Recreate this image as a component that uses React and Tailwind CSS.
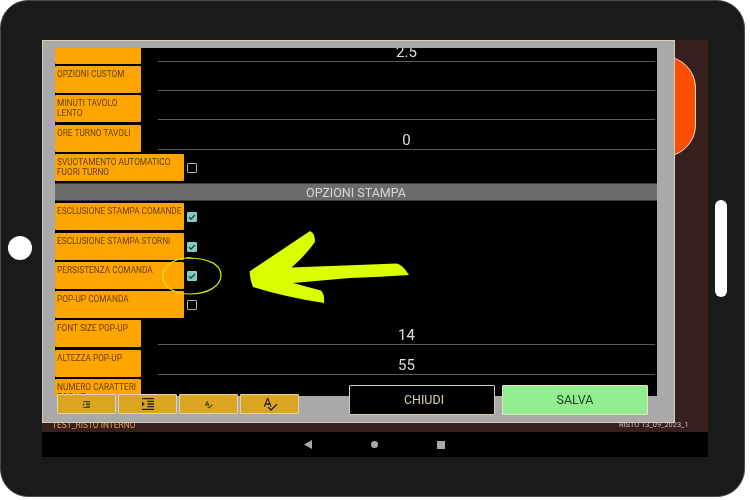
import React from "react";
import { MdFormatIndentIncrease, MdSpellcheck } from "react-icons/md";

const ROWS = [
  { label: "", value: "2.5" },
  { label: "OPZIONI CUSTOM", value: "" },
  { label: "MINUTI TAVOLO LENTO", value: "" },
  { label: "ORE TURNO TAVOLI", value: "0" },
  { label: "SVUOTAMENTO AUTOMATICO FUORI TURNO", check: false },
  { header: "OPZIONI STAMPA" },
  { label: "ESCLUSIONE STAMPA COMANDE", check: true },
  { label: "ESCLUSIONE STAMPA STORNI", check: true },
  { label: "PERSISTENZA COMANDA", check: true },
  { label: "POP-UP COMANDA", check: false },
  { label: "FONT SIZE POP-UP", value: "14" },
  { label: "ALTEZZA POP-UP", value: "55" },
  { label: "NUMERO CARATTERI POP-UP", value: "" },
];

const Checkbox = ({ on }) =>
  on ? (
    <div className="ml-[3px] mt-[9px] w-[10px] h-[10px] rounded-[1px] bg-[#80cbc4] flex items-center justify-center">
      <svg width="8" height="8" viewBox="0 0 8 8" fill="none" stroke="#23403e" strokeWidth="1.3">
        <path d="M1 4.2l2 1.8 4-4" />
      </svg>
    </div>
  ) : (
    <div className="ml-[3px] mt-[9px] w-[10px] h-[10px] rounded-[1px] border border-[#b5b5b5]"></div>
  );

const Row = ({ row }) => {
  if (row.header) {
    return (
      <div className="h-[18px] mb-[2.25px] pt-[3px] bg-[#6b6b6b] border-y border-[#3a3a3a] flex items-center justify-center text-[12.5px] text-[#d6d6d6]">
        {row.header}
      </div>
    );
  }
  const isCheck = row.check !== undefined;
  return (
    <div className="h-[29.25px] flex items-start">
      <div
        className={`h-[27px] shrink-0 bg-[#ffa500] rounded-[1px] pl-[2px] pt-[3px] text-[8.3px] leading-[10px] text-[#683e00] overflow-hidden ${
          isCheck ? "w-[129px]" : "w-[86px]"
        }`}
      >
        {row.label}
      </div>
      {isCheck ? (
        <Checkbox on={row.check} />
      ) : (
        <div className="ml-[17px] mr-[2px] flex-1 h-[25px] border-b border-[#5a5a5a] flex items-end justify-center text-[15px] leading-[18px] text-[#dddddd]">
          {row.value}
        </div>
      )}
    </div>
  );
};

const ToolButton = ({ children }) => (
  <button className="w-[59px] h-[20px] bg-[#daa520] border border-[#e3d3a8] rounded-[1px] flex items-center justify-center text-[#222]">
    {children}
  </button>
);

export default function App() {
  return (
    <div className="relative w-[750px] h-[500px] bg-white overflow-hidden font-['Roboto',sans-serif] blur-[0.4px]">
      {/* tablet */}
      <div className="w-[745px] h-[497px] bg-[#1a1a1a] border border-[#4a4a4a] rounded-[28px] pt-[39px] pl-[41px]">
        <div className="relative w-[666px] h-[417px] bg-[#361f1c] flex flex-col justify-end">
          <div className="absolute left-[590px] top-[16px] w-[64px] h-[101px] bg-[#ff4d00] border border-[#f3e4c8] rounded-[32px]"></div>
          <div className="h-[25px] bg-black flex items-center justify-center gap-[59px] pr-[1px]">
            <svg width="8" height="9" viewBox="0 0 8 9" className="fill-[#aaaaaa]">
              <path d="M0 4.5L8 0v9z" />
            </svg>
            <div className="w-[7px] h-[7px] rounded-full bg-[#aaaaaa]"></div>
            <div className="w-[8px] h-[8px] bg-[#aaaaaa]"></div>
          </div>

          {/* clipped footer labels under the modal */}
          <div className="absolute left-[10px] top-[380px] text-[8.4px] leading-[10px] text-[#e0a050]">TEST_RISTO INTERNO</div>
          <div className="absolute left-[577px] top-[380px] text-[7.4px] leading-[10px] text-[#c9c0b8]">RISTO 13_09_2023_1</div>

          {/* modal */}
          <div className="absolute left-0 top-0 w-[633px] h-[383px] bg-[#a9a9a9] border border-[#d8ccb4] pl-[12px] pt-[7px]">
            <div className="w-[602px] h-[348px] bg-black overflow-hidden">
              <div className="-mt-[11.25px]">
                {ROWS.map((row, i) => (
                  <Row key={i} row={row} />
                ))}
              </div>
            </div>
            <div className="relative flex items-start -mt-[11px]">
              <div className="flex gap-[2px] mt-[9px] ml-[2px]">
                <ToolButton>
                  <MdFormatIndentIncrease size={9} />
                </ToolButton>
                <ToolButton>
                  <MdFormatIndentIncrease size={16} />
                </ToolButton>
                <ToolButton>
                  <MdSpellcheck size={9} />
                </ToolButton>
                <ToolButton>
                  <MdSpellcheck size={16} />
                </ToolButton>
              </div>
              <button className="ml-[50px] w-[146px] h-[30px] pl-[4px] bg-black border border-[#d8ccb4] rounded-[1px] text-[12.5px] text-[#d8ccb4]">
                CHIUDI
              </button>
              <button className="ml-[7px] w-[146px] h-[30px] bg-[#90ee90] border border-[#e3e3c0] rounded-[1px] text-[12.5px] text-[#264026]">
                SALVA
              </button>
            </div>
          </div>
        </div>
      </div>

      {/* hardware buttons */}
      <div className="absolute left-[8px] top-[236px] w-[24px] h-[24px] rounded-full bg-white"></div>
      <div className="absolute left-[715px] top-[200px] w-[12px] h-[97px] rounded-full bg-white"></div>

      {/* hand drawn annotation */}
      <svg className="absolute left-0 top-0" width="750" height="500" viewBox="0 0 750 500" fill="none">
        <path
          d="M193 259Q190 257 186 258C172 259 162 268 163 278C164 288 176 294 190 294C208 294 221 286 221 275C221 264 208 258 186 258"
          stroke="#d4e600"
          strokeWidth="1.2"
        />
        <path
          d="M249.5 271.5L310 231Q315 233 315 242Q305 256 291.5 267.5L396.5 263.5Q402 264 409 275Q380 277 350 278L293 283L321 290.5Q325 295 324 303Q285 297 253 287Q250 280 249.5 271.5Z"
          fill="#d9ff00"
        />
      </svg>
    </div>
  );
}
